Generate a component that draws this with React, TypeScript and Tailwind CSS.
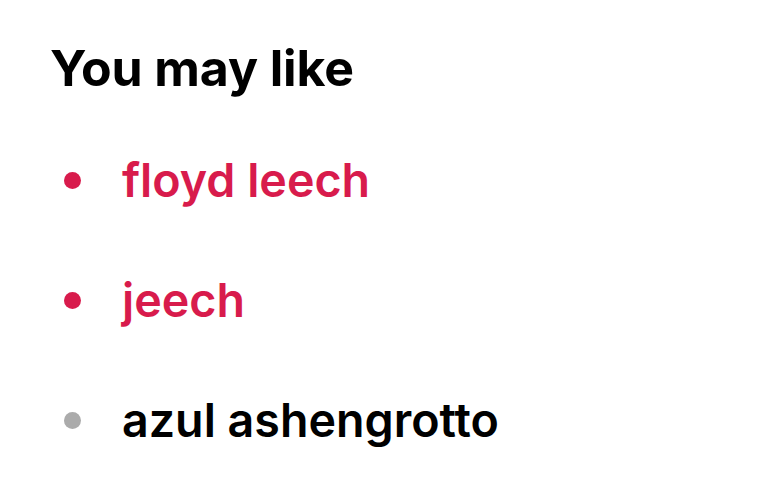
import React from "react";

type Item = { name: string; active: boolean };

const items: Item[] = [
  { name: "floyd leech", active: true },
  { name: "jeech", active: true },
  { name: "azul ashengrotto", active: false },
];

export default function App() {
  return (
    <div
      className="w-[780px] h-[484px] bg-white pl-[50px] pt-[38px] overflow-hidden"
      style={{ fontFamily: "Inter, 'Noto Sans', sans-serif" }}
    >
      <h2 className="text-[50px] leading-[60px] font-bold text-black tracking-[-0.1px]">
        You may like
      </h2>
      <ul className="mt-[54px] flex flex-col gap-[64px]">
        {items.map((it) => (
          <li key={it.name} className="flex items-center h-[56px]">
            <span
              className={
                it.active
                  ? "w-[17px] h-[17px] rounded-full bg-[#d81b4c] ml-[14px]"
                  : "w-[17px] h-[17px] rounded-full bg-[#ababab] ml-[14px]"
              }
            />
            <span
              className={
                it.active
                  ? "ml-[41px] text-[46.6px] leading-[56px] font-semibold text-[#d81b4c]"
                  : "ml-[41px] text-[46.6px] leading-[56px] font-semibold text-black"
              }
            >
              {it.name}
            </span>
          </li>
        ))}
      </ul>
    </div>
  );
}
